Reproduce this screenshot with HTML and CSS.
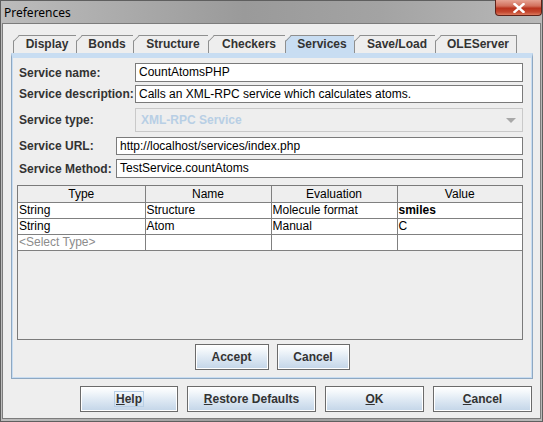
FILE: index.html
```html
<!DOCTYPE html>
<html>
<head>
<meta charset="utf-8">
<title>Preferences</title>
<link rel="stylesheet" href="styles.css">
</head>
<body>
<div class="window">
  <div class="titlebar">
    <span class="title">Preferences</span>
    <div class="close">
      <svg width="12" height="10" viewBox="0 0 12 10"><path d="M1.5 1 L10.5 9 M10.5 1 L1.5 9" stroke="#ffffff" stroke-width="2.4" stroke-linecap="square"/></svg>
    </div>
  </div>
  <div class="client">
    <div class="tabs">
      <div class="tab w-display">Display</div>
      <div class="tab w-bonds">Bonds</div>
      <div class="tab w-structure">Structure</div>
      <div class="tab w-checkers">Checkers</div>
      <div class="tab w-services selected">Services</div>
      <div class="tab w-save">Save/Load</div>
      <div class="tab w-ole last">OLEServer</div>
    </div>
    <div class="panel">
      <div class="form">
        <div class="row r-name">
          <span class="lbl wide">Service name:</span>
          <div class="field">CountAtomsPHP</div>
        </div>
        <div class="row r-desc">
          <span class="lbl wide">Service description:</span>
          <div class="field short">Calls an XML-RPC service which calculates atoms.</div>
        </div>
        <div class="row r-type">
          <span class="lbl wide">Service type:</span>
          <div class="combo"><span class="combo-text">XML-RPC Service</span><span class="arrow"></span></div>
        </div>
        <div class="row r-url">
          <span class="lbl narrow">Service URL:</span>
          <div class="field short">http://localhost/services/index.php</div>
        </div>
        <div class="row r-method">
          <span class="lbl narrow">Service Method:</span>
          <div class="field">TestService.countAtoms</div>
        </div>
      </div>
      <div class="table-box">
        <table class="grid">
          <thead>
            <tr><th class="c1">Type</th><th class="c2">Name</th><th class="c3">Evaluation</th><th class="c4">Value</th></tr>
          </thead>
          <tbody>
            <tr><td>String</td><td>Structure</td><td>Molecule format</td><td class="bold">smiles</td></tr>
            <tr><td>String</td><td>Atom</td><td>Manual</td><td>C</td></tr>
            <tr><td class="hint">&lt;Select Type&gt;</td><td></td><td></td><td></td></tr>
          </tbody>
        </table>
      </div>
      <div class="panel-buttons">
        <div class="btn b-accept">Accept</div>
        <div class="btn b-pcancel">Cancel</div>
      </div>
    </div>
    <div class="footer">
      <div class="btn b-help"><span class="focus"><u>H</u>elp</span></div>
      <div class="btn b-restore"><u>R</u>estore Defaults</div>
      <div class="btn b-ok"><u>O</u>K</div>
      <div class="btn b-cancel"><u>C</u>ancel</div>
    </div>
  </div>
</div>
</body>
</html>
```

FILE: styles.css
```css
* { box-sizing: border-box; }
html, body { margin: 0; padding: 0; }
body {
  width: 543px;
  height: 422px;
  overflow: hidden;
  font-family: "Liberation Sans", Arial, sans-serif;
  font-size: 12px;
  color: #000;
  background: #a8a8a8;
}
.window {
  width: 543px;
  height: 422px;
  display: flex;
  flex-direction: column;
  border: 1px solid #5f5f5f;
  background: linear-gradient(to right, #bcbcbc 0%, #a9a9a9 25%, #9a9a9a 45%, #a3a3a3 70%, #b8b8b8 100%);
}
.titlebar {
  height: 22px;
  display: flex;
  align-items: flex-start;
  flex: none;
}
.title {
  padding: 3px 0 0 3px;
  font-family: "Noto Sans", "Open Sans", sans-serif;
  font-size: 12px;
  color: #000;
}
.close {
  margin-left: auto;
  margin-right: 0;
  width: 47px;
  height: 16px;
  margin-top: -1px;
  border: 1px solid #5e2219;
  border-top: none;
  border-radius: 0 0 4px 4px;
  background: linear-gradient(#e6a393 0%, #d2705c 40%, #b9331d 55%, #c4472f 80%, #dc7a5e 100%);
  display: flex;
  align-items: center;
  justify-content: center;
}
.client {
  flex: 1;
  margin: 0 1px 2px 1px;
  border: 1px solid #7c7c7c;
  background: #eeeeee;
  display: flex;
  flex-direction: column;
}
.tabs {
  display: flex;
  margin: 11px 0 0 10px;
  height: 18px;
  flex: none;
}
.tab {
  position: relative;
  height: 18px;
  border-top: 1px solid #8e8f8f;
  border-left: 1px solid #8e8f8f;
  background: #eeeeee;
  font-weight: bold;
  color: #333333;
  font-size: 12px;
  line-height: 16px;
  text-align: center;
  padding-left: 4px;
  clip-path: polygon(6px 0, 100% 0, 100% 100%, 0 100%, 0 6px);
}
.tab::before {
  content: "";
  position: absolute;
  left: -1px;
  top: 5px;
  width: 9px;
  height: 1px;
  background: #8e8f8f;
  transform-origin: 0 0;
  transform: rotate(-45deg);
}
.tab.last { border-right: 1px solid #8e8f8f; }
.tab.selected { background: #c8ddf2; }
.w-display { width: 63px; }
.w-bonds { width: 57px; }
.w-structure { width: 75px; }
.w-checkers { width: 77px; }
.w-services { width: 69px; }
.w-save { width: 81px; }
.w-ole { width: 82px; }

.panel {
  margin-left: 8px;
  width: 522px;
  height: 326px;
  border: 1px solid #8ea8c2;
  border-top: 4px solid #c8ddf2;
  box-shadow: inset 0 0 0 1px #c8ddf2;
  display: flex;
  flex-direction: column;
  padding: 3px 9px 0 5px;
  flex: none;
}
.form { display: flex; flex-direction: column; }
.row { display: flex; align-items: center; }
.lbl {
  font-weight: bold;
  color: #333333;
  padding-left: 2px;
  flex: none;
}
.lbl.wide { width: 118px; }
.lbl.narrow { width: 99px; }
.field {
  flex: 1;
  height: 19px;
  border: 1px solid #7a7a7a;
  background: #ffffff;
  padding: 0 3px;
  line-height: 17px;
  white-space: nowrap;
  overflow: hidden;
}
.field.short { height: 18px; line-height: 16px; }
.r-name { margin-top: 3px; }
.r-desc { margin-top: 3px; }
.r-type { margin-top: 5px; }
.r-url { margin-top: 5px; }
.r-method { margin-top: 4px; }
.combo {
  flex: 1;
  height: 24px;
  border: 1px solid #c9c9c9;
  background: #eeeeee;
  display: flex;
  align-items: center;
  padding-left: 5px;
}
.combo-text {
  flex: 1;
  font-weight: bold;
  color: #b8cfe5;
}
.arrow {
  width: 0;
  height: 0;
  border-left: 5px solid transparent;
  border-right: 5px solid transparent;
  border-top: 5px solid #a8a8a8;
  margin-right: 6px;
}
.table-box {
  margin-top: 7px;
  margin-left: 0;
  height: 155px;
  border: 1px solid #7a7a7a;
  background: #eeeeee;
  flex: none;
}
.grid {
  border-collapse: collapse;
  width: 504px;
  table-layout: fixed;
  font-size: 12px;
}
.grid th, .grid td {
  height: 16px;
  padding: 0 1px;
  line-height: 14px;
  border: 1px solid #808080;
  white-space: nowrap;
  overflow: hidden;
}
.grid tr:first-child th { border-top: none; }
.grid th:first-child, .grid td:first-child { border-left: none; }
.grid th:last-child, .grid td:last-child { border-right: none; }
.grid th {
  font-weight: normal;
  background: #eeeeee;
  text-align: center;
  color: #000;
}
.grid td { background: #ffffff; text-align: left; }
.grid .c1 { width: 127px; }
.grid .c2 { width: 126px; }
.grid .c3 { width: 126px; }
.grid .c4 { width: 125px; }
.grid .bold { font-weight: bold; }
.grid .hint { color: #8c8c8c; }
.panel-buttons {
  display: flex;
  justify-content: center;
  gap: 8px;
  margin-top: 4px;
  padding-left: 4px;
}
.btn {
  height: 26px;
  border: 1px solid #6b6b6b;
  box-shadow: inset 0 0 0 1px #ffffff;
  background: linear-gradient(#ffffff 0%, #f4f8fb 20%, #dde8f3 55%, #c3d5e8 100%);
  font-weight: bold;
  color: #333333;
  font-size: 12px;
  display: flex;
  align-items: center;
  justify-content: center;
}
.b-accept { width: 74px; }
.b-pcancel { width: 73px; }
.footer {
  display: flex;
  justify-content: flex-end;
  gap: 9px;
  padding-right: 8px;
  margin-top: 7px;
}
.b-help { width: 98px; }
.b-restore { width: 129px; }
.b-ok { width: 99px; }
.b-cancel { width: 99px; }
.focus {
  border: 1px solid #b8cfe5;
  padding: 0 1px;
  line-height: 14px;
}
```
